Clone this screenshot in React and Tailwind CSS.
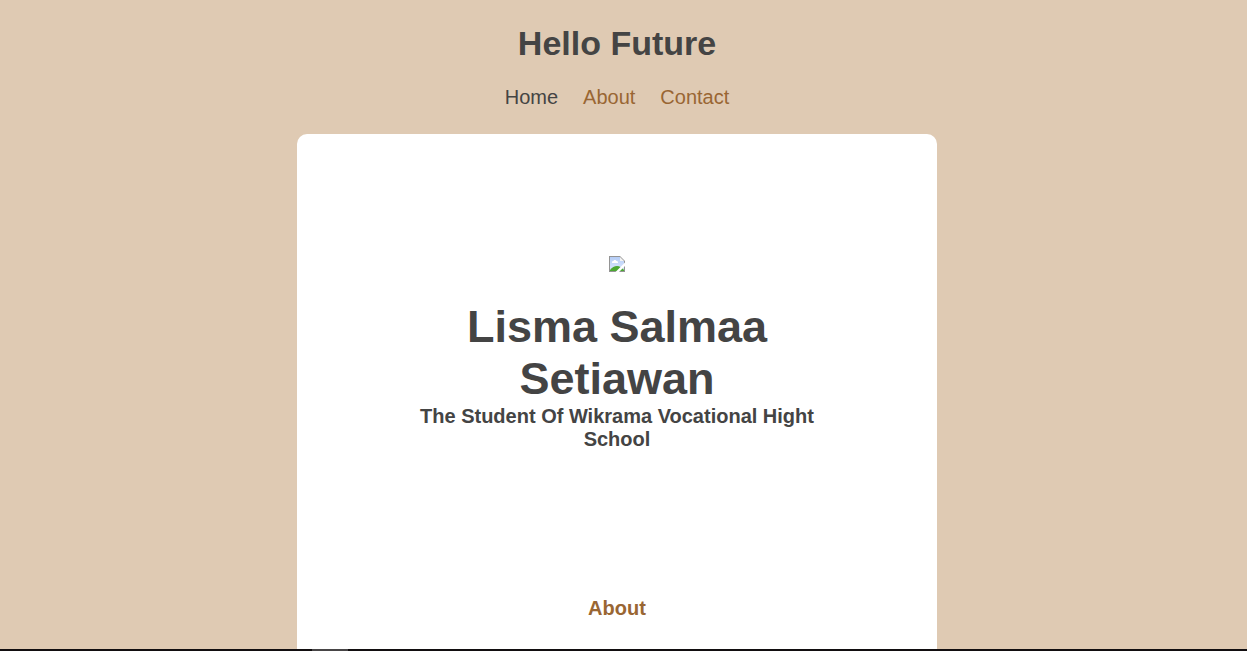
function BrokenImage() {
  return (
    <svg role="img" aria-label="Portrait" className="size-4" viewBox="0 0 16 16">
      <defs>
        <linearGradient id="sky" x1="0" y1="0" x2="0" y2="1">
          <stop offset="0" stopColor="#b5cdf7" />
          <stop offset="1" stopColor="#dde8fd" />
        </linearGradient>
      </defs>
      <path d="M0 0H11L16 5V16H0Z" fill="#949494" />
      <path d="M1 1H11V5H15V15H1Z" fill="url(#sky)" />
      <path d="M11 1L15 5H11Z" fill="#f2f2f2" />
      <path d="M3 7V6C3 5 4 5 4.500 5C4.500 3.500 7 3.500 7.500 5C8.500 5 9 5.500 9 7Z" fill="#fff" />
      <path d="M1 15V14C3 11.500 5.500 10 8 10C10.500 10 13.500 12 15 14V15Z" fill="#4ca833" />
      <path d="M16 6.500V10L10 16H6.500Z" fill="#fff" />
    </svg>
  );
}

const links = [
  { label: "Home", href: "#home", color: "text-[#444444]" },
  { label: "About", href: "#about", color: "text-[#996633]" },
  { label: "Contact", href: "#contact", color: "text-[#996633]" },
];

export default function App() {
  return (
    <div className="flex min-h-screen flex-col bg-[#dfcab3] font-['Liberation_Sans',Arial,sans-serif] text-xl leading-[23px] text-[#444444]">
      <div className="flex flex-1 flex-col items-center pr-[13px]">
        <header className="flex flex-col items-center gap-[23px] pt-6 pb-[25px]">
          <h1 className="text-[34px] leading-[39px] font-bold">Hello Future</h1>
          <nav className="flex gap-[25px]">
            {links.map((link) => (
              <a key={link.label} href={link.href} className={link.color}>
                {link.label}
              </a>
            ))}
          </nav>
        </header>
        <main className="flex w-full max-w-[640px] flex-1 flex-col items-center rounded-t-[10px] bg-white px-[120px] text-center">
          <section id="home" className="flex flex-col items-center pt-[122px]">
            <BrokenImage />
            <h2 className="pt-[29px] text-[45px] leading-[52px] font-bold">Lisma Salmaa Setiawan</h2>
            <h3 className="font-bold">The Student Of Wikrama Vocational Hight School</h3>
          </section>
          <section id="about" className="pt-[146px]">
            <h3 className="font-bold text-[#996633]">About</h3>
          </section>
        </main>
      </div>
      <footer className="flex h-0.5 bg-[#120e10] pl-[312px]">
        <div className="w-9 bg-[#474546]" />
      </footer>
    </div>
  );
}
